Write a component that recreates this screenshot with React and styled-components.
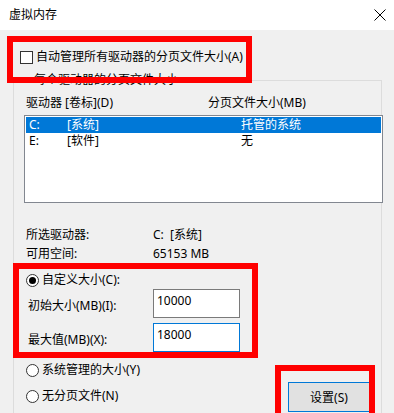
import React from 'react'
import styled, { createGlobalStyle } from 'styled-components'

const Global = createGlobalStyle`
  html, body {
    margin: 0;
    padding: 0;
    background: #f0f0f0;
  }
  body {
    font-family: "Noto Sans", "Noto Sans CJK SC", sans-serif;
    font-size: 12px;
    color: #000;
  }
`

const Window = styled.div`
  position: relative;
  width: 394px;
  height: 413px;
  overflow: hidden;
  background: #f0f0f0;
  display: flex;
  flex-direction: column;
`

const TitleBar = styled.div`
  height: 30px;
  flex: none;
  background: #fff;
  display: flex;
  align-items: center;
  justify-content: space-between;
  padding: 0 8px 0 9px;
  box-sizing: border-box;
`

const Title = styled.span`
  line-height: 16px;
`

const Body = styled.div`
  flex: 1;
  display: flex;
  flex-direction: column;
`

const CheckRow = styled.label`
  display: flex;
  align-items: center;
  gap: 3px;
  height: 16px;
  margin: 19px 0 0 20px;
  line-height: 16px;
`

const Box = styled.span`
  width: 13px;
  height: 13px;
  box-sizing: border-box;
  border: 1px solid #333;
  background: #fff;
  flex: none;
`

const Radio = styled.span`
  width: 13px;
  height: 13px;
  box-sizing: border-box;
  border: 1px solid #333;
  border-radius: 50%;
  background: #fff;
  flex: none;
  display: flex;
  align-items: center;
  justify-content: center;
  &::after {
    content: "";
    width: 7px;
    height: 7px;
    border-radius: 50%;
    background: ${p => (p.checked ? '#000' : 'transparent')};
  }
`

const Group = styled.fieldset`
  margin: 8px 12px 0 13px;
  padding: 0 0 0 10px;
  border: 1px solid #dcdcdc;
  border-bottom: none;
  flex: 1;
  min-width: 0;
`

const Legend = styled.legend`
  margin-left: 8px;
  padding: 0 2px;
  line-height: 14px;
`

const HeaderRow = styled.div`
  display: grid;
  grid-template-columns: 182px 1fr;
  padding-left: 2px;
  height: 16px;
  line-height: 16px;
  margin-top: 8px;
`

const ListBox = styled.div`
  width: 359px;
  height: 88px;
  box-sizing: border-box;
  margin-top: 4px;
  padding: 1px;
  border: 1px solid #828790;
  background: #fff;
`

const ListRow = styled.div`
  display: grid;
  grid-template-columns: 38px 174px 1fr;
  padding-left: 3px;
  height: 16px;
  line-height: 16px;
  background: ${p => (p.selected ? '#0078d7' : 'transparent')};
  color: ${p => (p.selected ? '#fff' : '#000')};
`

const InfoGrid = styled.div`
  display: grid;
  grid-template-columns: 127px 1fr;
  row-gap: 3px;
  padding-left: 2px;
  margin-top: 24px;
  line-height: 16px;
`

const RadioRow = styled.label`
  display: flex;
  align-items: center;
  gap: 3px;
  height: 16px;
  line-height: 16px;
  padding-left: 2px;
  margin-top: ${p => p.gap || 0}px;
`

const SizeRow = styled.div`
  display: grid;
  grid-template-columns: 125px 87px;
  align-items: center;
  padding-left: 4px;
  margin-top: ${p => p.gap || 0}px;
`

const SizeLabel = styled.span`
  line-height: 16px;
  padding-top: 5px;
`

const Input = styled.div`
  height: 29px;
  box-sizing: border-box;
  border: 1px solid ${p => (p.focused ? '#0078d7' : '#7a7a7a')};
  background: #fff;
  padding: 3px 0 0 3px;
  font-size: 12px;
  line-height: 16px;
`

const Bottom = styled.div`
  display: flex;
  justify-content: space-between;
  padding-right: 11px;
`

const RadioColumn = styled.div`
  display: flex;
  flex-direction: column;
`

const Button = styled.button`
  width: 82px;
  height: 30px;
  margin-top: 30px;
  box-sizing: border-box;
  border: 1px solid #0078d7;
  background: #e1e1e1;
  font-family: inherit;
  font-size: 12px;
  color: #000;
  padding: 0;
`

const Mark = styled.div`
  position: absolute;
  box-sizing: border-box;
  border: 6px solid #ff0000;
  pointer-events: none;
`

const Close = () => (
  <svg width="12" height="12" viewBox="0 0 12 12">
    <path d="M0.5 0.5 L11.5 11.5 M11.5 0.5 L0.5 11.5" stroke="#000" strokeWidth="1" fill="none" />
  </svg>
)

export default function App() {
  return (
    <>
      <Global />
      <Window>
        <TitleBar>
          <Title>虚拟内存</Title>
          <Close />
        </TitleBar>
        <Body>
          <CheckRow>
            <Box />
            <span>自动管理所有驱动器的分页文件大小(A)</span>
          </CheckRow>
          <Group>
            <Legend>每个驱动器的分页文件大小</Legend>
            <HeaderRow>
              <span>驱动器 [卷标](D)</span>
              <span>分页文件大小(MB)</span>
            </HeaderRow>
            <ListBox>
              <ListRow selected>
                <span>C:</span>
                <span>[系统]</span>
                <span>托管的系统</span>
              </ListRow>
              <ListRow>
                <span>E:</span>
                <span>[软件]</span>
                <span>无</span>
              </ListRow>
            </ListBox>
            <InfoGrid>
              <span>所选驱动器:</span>
              <span>C:&nbsp;&nbsp;[系统]</span>
              <span>可用空间:</span>
              <span>65153 MB</span>
            </InfoGrid>
            <RadioRow gap={10}>
              <Radio checked />
              <span>自定义大小(C):</span>
            </RadioRow>
            <SizeRow gap={1}>
              <SizeLabel>初始大小(MB)(I):</SizeLabel>
              <Input>10000</Input>
            </SizeRow>
            <SizeRow gap={5}>
              <SizeLabel>最大值(MB)(X):</SizeLabel>
              <Input focused>18000</Input>
            </SizeRow>
            <Bottom>
              <RadioColumn>
                <RadioRow gap={10}>
                  <Radio />
                  <span>系统管理的大小(Y)</span>
                </RadioRow>
                <RadioRow gap={10}>
                  <Radio />
                  <span>无分页文件(N)</span>
                </RadioRow>
              </RadioColumn>
              <Button>设置(S)</Button>
            </Bottom>
          </Group>
        </Body>
        <Mark style={{ left: 7, top: 36, width: 245, height: 47 }} />
        <Mark style={{ left: 13, top: 263, width: 245, height: 95 }} />
        <Mark style={{ left: 275, top: 365, width: 100, height: 55 }} />
      </Window>
    </>
  )
}
